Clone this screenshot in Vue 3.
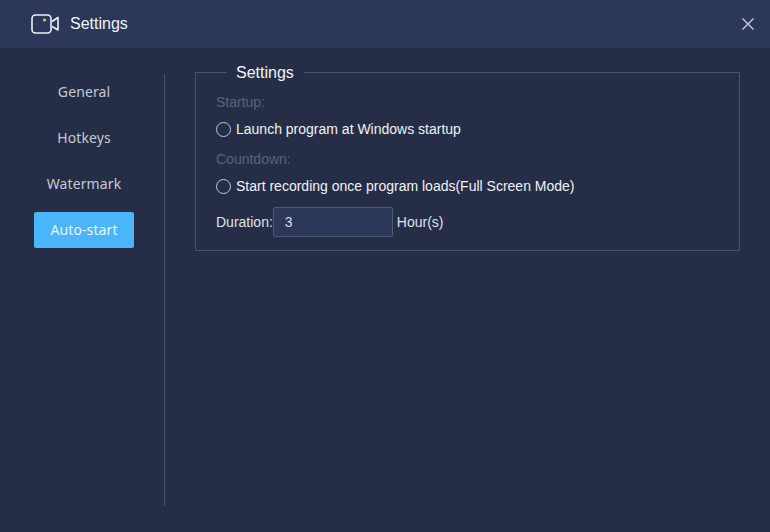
<script setup>
const tabs = ['General', 'Hotkeys', 'Watermark', 'Auto-start']
const active = 'Auto-start'
</script>

<template>
  <div class="window">
    <header class="titlebar">
      <svg class="cam" width="29" height="20" viewBox="0 0 29 20" fill="none">
        <rect x="1" y="1" width="19" height="18" rx="3.5" stroke="#eef1f8" stroke-width="1.6" />
        <path d="M21 7.5 L27 3.5 V16 L21 12.5" stroke="#eef1f8" stroke-width="1.6" stroke-linejoin="round" />
        <circle cx="13.5" cy="6" r="1.6" fill="#c9c96a" />
      </svg>
      <span class="title">Settings</span>
      <svg class="close" width="14" height="14" viewBox="0 0 14 14">
        <path d="M1.5 1.5 L12.5 12.5 M12.5 1.5 L1.5 12.5" stroke="#c3cbdd" stroke-width="1.4" />
      </svg>
    </header>
    <div class="body">
      <nav class="side">
        <div v-for="t in tabs" :key="t" class="tab" :class="{ on: t === active }">{{ t }}</div>
      </nav>
      <main class="content">
        <fieldset class="group">
          <legend class="legend">Settings</legend>
          <div class="label first">Startup:</div>
          <label class="radio"><span class="dot"></span>Launch program at Windows startup</label>
          <div class="label second">Countdown:</div>
          <label class="radio"><span class="dot"></span>Start recording once program loads(Full Screen Mode)</label>
          <div class="duration">
            <span>Duration:</span>
            <span class="input">3</span>
            <span>Hour(s)</span>
          </div>
        </fieldset>
      </main>
    </div>
  </div>
</template>

<style>
html, body { margin: 0; background: #252e46; }
</style>

<style scoped>
.window {
  width: 770px;
  height: 532px;
  overflow: hidden;
  background: #252e46;
  display: flex;
  flex-direction: column;
  font-family: "Liberation Sans", Arial, sans-serif;
  color: #fff;
}
.titlebar {
  height: 48px;
  flex: none;
  background: #2c3759;
  display: flex;
  align-items: center;
  padding: 0 15px 0 31px;
}
.cam { margin-right: 10px; }
.title { font-size: 16px; color: #f2f4f9; flex: 1; }
.body { flex: 1; display: flex; padding: 14px 30px 26px 34px; align-items: stretch; }
.side {
  width: 130px;
  flex: none;
  margin-top: 12px;
  border-right: 1px solid #4a5369;
  display: flex;
  flex-direction: column;
  gap: 10px;
  box-sizing: content-box;
}
.tab {
  width: 100px;
  height: 36px;
  line-height: 36px;
  text-align: center;
  font-family: "Noto Sans", sans-serif;
  font-size: 14px;
  letter-spacing: 0.1px;
  color: #c4c9d4;
  border-radius: 2px;
}
.tab.on { background: #4ab5fb; color: #e9f6ff; }
.content { flex: 1; padding-left: 30px; }
.group {
  margin: 0;
  border: 1px solid #4a5369;
  padding: 0 20px 13px;
  min-width: 0;
}
.legend {
  margin-left: 11px;
  padding: 2px 10px 0 9px;
  font-size: 16px;
  line-height: 18px;
  color: #f2f4f9;
}
.label { font-size: 14px; color: #5a6379; line-height: 16px; }
.first { margin-top: 12px; }
.second { margin-top: 14px; }
.radio {
  display: flex;
  align-items: center;
  font-size: 14px;
  line-height: 16px;
  color: #f0f2f6;
  margin-top: 11px;
}
.dot {
  width: 13px;
  height: 13px;
  border: 1px solid #c4c9d4;
  border-radius: 50%;
  margin-right: 5px;
}
.duration {
  display: flex;
  align-items: center;
  font-size: 14px;
  color: #dfe2ea;
  margin-top: 13px;
}
.input {
  width: 107px;
  height: 28px;
  line-height: 28px;
  margin: 0 4px 0 0;
  padding-left: 11px;
  border: 1px solid #4f5a76;
  border-radius: 2px;
  background: #2c3759;
  color: #d8dce6;
}
</style>
